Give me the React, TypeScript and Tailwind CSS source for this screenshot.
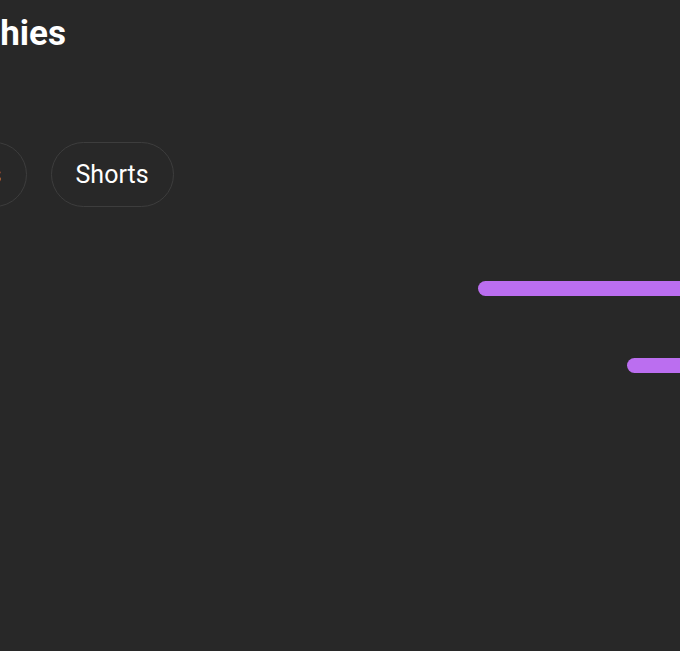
import React from 'react';

const chips = ['Videos', 'Shorts'];

const bars = [
  { offset: 'ml-[478px]' },
  { offset: 'ml-[627px]' },
];

export default function App() {
  return (
    <div className="w-full h-[651px] overflow-hidden bg-[#282828] font-['Roboto',sans-serif] text-white">
      {/* Header */}
      <h1 className="-ml-[72px] pt-[13px] text-[35px] font-bold leading-[42px] whitespace-nowrap">
        Trophies
      </h1>

      {/* Filter chips */}
      <div className="flex gap-6 -ml-[100px] mt-[87px]">
        {chips.map((c) => (
          <button
            key={c}
            className="h-[65px] px-[24px] rounded-full border border-[#3d3d3d] text-[25px] font-normal whitespace-nowrap"
          >
            {c}
          </button>
        ))}
      </div>

      {/* Progress bars */}
      <div className="mt-[74px] flex flex-col gap-[62px]">
        {bars.map((b, i) => (
          <div key={i} className={`${b.offset} h-[15px] w-[400px] rounded-full bg-[#bb6ef0]`} />
        ))}
      </div>
    </div>
  );
}
